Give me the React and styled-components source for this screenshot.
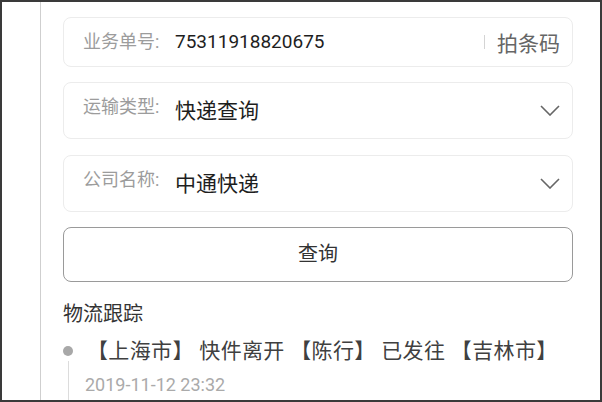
import React from 'react';
import styled, { createGlobalStyle } from 'styled-components';

const Global = createGlobalStyle`
  html, body {
    margin: 0;
    padding: 0;
    background: #fff;
  }
  * {
    box-sizing: border-box;
  }
`

const Frame = styled.div`
  width: 602px;
  height: 402px;
  border: 2px solid #3a3a3a;
  display: flex;
  overflow: hidden;
  background: #fff;
  font-family: Roboto, "Noto Sans CJK SC", sans-serif;
`

const Gutter = styled.div`
  width: 39px;
  flex-shrink: 0;
  border-right: 1px solid #cfcfcf;
`

const Content = styled.div`
  flex: 1;
  padding: 15px 27px 0 22px;
  display: flex;
  flex-direction: column;
`

const Card = styled.div`
  height: ${p => p.h}px;
  margin-bottom: ${p => p.mb || 0}px;
  border: 1px solid #ececec;
  border-radius: 8px;
  display: flex;
  align-items: ${p => p.top ? 'flex-start' : 'center'};
  padding: ${p => p.top ? '12px' : '0'} 12px 0 19px;
`

const Label = styled.span`
  width: 92px;
  flex-shrink: 0;
  font-size: 18px;
  color: #9c9c9c;
  line-height: 24px;
`

const Value = styled.span`
  flex: 1;
  font-size: ${p => p.size || 21}px;
  color: #1e1e1e;
  line-height: 28px;
  margin-top: ${p => p.offset || 0}px;
`

const Divider = styled.span`
  width: 1px;
  height: 14px;
  background: #d4d4d4;
  margin-right: 12px;
`

const Action = styled.span`
  font-size: 21px;
  color: #666;
`

const Chevron = styled.svg`
  width: 20px;
  height: 11px;
  margin-top: 10px;
  flex-shrink: 0;
`

const Button = styled.button`
  height: 55px;
  border: 1.5px solid #9a9a9a;
  border-radius: 8px;
  background: #fff;
  padding: 0 0 5px;
  font-family: Roboto, "Noto Sans CJK SC", sans-serif;
  font-size: 20px;
  color: #333;
  width: 100%;
`

const Title = styled.div`
  margin-top: 18px;
  font-size: 20px;
  line-height: 28px;
  color: #333;
`

const Item = styled.div`
  display: flex;
  margin-top: 8px;
  flex: 1;
`

const Rail = styled.div`
  width: 10px;
  display: flex;
  flex-direction: column;
  align-items: center;
  margin-right: 14px;
`

const Dot = styled.span`
  width: 10px;
  height: 10px;
  border-radius: 50%;
  background: #a8a8a8;
  margin-top: 10px;
`

const Line = styled.span`
  flex: 1;
  width: 1px;
  background: #dcdcdc;
  margin-top: 5px;
`

const Body = styled.div`
  display: flex;
  flex-direction: column;
`

const Text = styled.div`
  font-size: 21px;
  line-height: 30px;
  letter-spacing: 0.35px;
  color: #404040;
  white-space: nowrap;
`

const Time = styled.div`
  font-size: 18px;
  line-height: 26px;
  color: #aaa;
  margin-top: 6px;
  margin-left: -2px;
`

function Arrow() {
  return (
    <Chevron viewBox="0 0 20 11">
      <path d="M1 1 L10 10 L19 1" fill="none" stroke="#666" strokeWidth="1.6" />
    </Chevron>
  )
}

export default function App() {
  return (
    <>
      <Global />
      <Frame>
        <Gutter />
        <Content>
          <Card h={50} mb={15}>
            <Label>业务单号:</Label>
            <Value size={19}>75311918820675</Value>
            <Divider />
            <Action>拍条码</Action>
          </Card>
          <Card h={57} mb={16} top>
            <Label>运输类型:</Label>
            <Value offset={2}>快递查询</Value>
            <Arrow />
          </Card>
          <Card h={57} mb={15} top>
            <Label>公司名称:</Label>
            <Value offset={2}>中通快递</Value>
            <Arrow />
          </Card>
          <Button>查询</Button>
          <Title>物流跟踪</Title>
          <Item>
            <Rail>
              <Dot />
              <Line />
            </Rail>
            <Body>
              <Text>【上海市】 快件离开 【陈行】 已发往 【吉林市】</Text>
              <Time>2019-11-12 23:32</Time>
            </Body>
          </Item>
        </Content>
      </Frame>
    </>
  )
}
